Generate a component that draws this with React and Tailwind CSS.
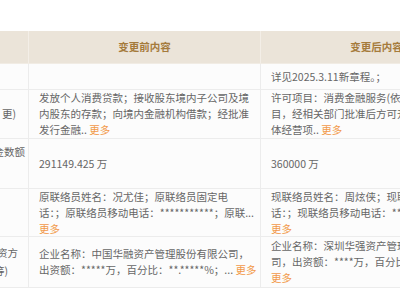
import React from "react";

const More = () => <span className="text-[#f29a4a]">更多</span>;

function Label({ lines }) {
  return (
    <div className="w-[29px] shrink-0 overflow-hidden border-r border-[#ececec] flex flex-col justify-center leading-[18px]">
      {lines.map((l, i) => (
        <div key={i} className="flex justify-end whitespace-nowrap h-[18px]" style={{ paddingRight: l.pr }}>
          {l.t}
        </div>
      ))}
    </div>
  );
}

function Cell({ children }) {
  return (
    <div className="w-[232px] shrink-0 border-r border-[#ececec] pl-[10px] flex flex-col justify-center leading-[16px] overflow-hidden">
      {children}
    </div>
  );
}

function Line({ children }) {
  return <div className="whitespace-nowrap">{children}</div>;
}

function Row({ h, children }) {
  return (
    <div className="flex border-b border-[#ececec] bg-[#fcfcfc]" style={{ height: h }}>
      {children}
    </div>
  );
}

export default function App() {
  return (
    <div
      className="w-[400px] h-[300px] overflow-hidden bg-white text-[10.5px] text-[#666666]"
      style={{ fontFamily: '"Noto Sans CJK SC", "Noto Sans", sans-serif' }}
    >
      <div className="w-[493px] pt-[31px]">
        <div className="flex h-[33px] bg-[#ebe4d9] border-b border-[#f1ece4]">
          <div className="w-[29px] shrink-0 border-r border-[#f3eee7]" />
          <div className="w-[232px] shrink-0 border-r border-[#f3eee7] flex items-center justify-center font-bold text-[#a57b3c]">
            变更前内容
          </div>
          <div className="w-[232px] shrink-0 border-r border-[#f3eee7] flex items-center justify-center font-bold text-[#a57b3c]">
            变更后内容
          </div>
        </div>

        <Row h={26}>
          <Label lines={[]} />
          <Cell />
          <Cell>
            <Line>详见2025.3.11新章程。；</Line>
          </Cell>
        </Row>

        <Row h={49}>
          <Label lines={[{ t: "", pr: 0 }, { t: "更)", pr: 12 }, { t: "", pr: 0 }]} />
          <Cell>
            <Line>发放个人消费贷款；接收股东境内子公司及境</Line>
            <Line>内股东的存款；向境内金融机构借款；经批准</Line>
            <Line>
              发行金融.. <More />
            </Line>
          </Cell>
          <Cell>
            <Line>许可项目：消费金融服务(依法须经批准的项目</Line>
            <Line>目，经相关部门批准后方可开展经营活动，具</Line>
            <Line>
              体经营项.. <More />
            </Line>
          </Cell>
        </Row>

        <Row h={50}>
          <div className="w-[29px] shrink-0 overflow-hidden border-r border-[#ececec] leading-[18px] pt-[4px]">
            <div className="flex justify-end whitespace-nowrap pr-[3px]">注册资金数额</div>
          </div>
          <Cell>
            <Line>291149.425 万</Line>
          </Cell>
          <Cell>
            <Line>360000 万</Line>
          </Cell>
        </Row>

        <Row h={48}>
          <Label lines={[]} />
          <Cell>
            <Line>原联络员姓名：况尤佳；原联络员固定电</Line>
            <Line>话：；原联络员移动电话：***********；原联...</Line>
            <Line>
              <More />
            </Line>
          </Cell>
          <Cell>
            <Line>现联络员姓名：周炫侠；现联络员固定电</Line>
            <Line>话：；现联络员移动电话：***********；现联...</Line>
            <Line>
              <More />
            </Line>
          </Cell>
        </Row>

        <Row h={51}>
          <Label lines={[{ t: "投资人(股权)出资方", pr: 10 }, { t: "股东等)", pr: 20 }]} />
          <Cell>
            <Line>企业名称：中国华融资产管理股份有限公司，</Line>
            <Line>
              出资额：*****万，百分比：**.*****%；... <More />
            </Line>
          </Cell>
          <Cell>
            <Line>企业名称：深圳华强资产管理集团有限责任公</Line>
            <Line>司，出资额：****万，百分比：**.*****%；</Line>
            <Line>
              <More />
            </Line>
          </Cell>
        </Row>
      </div>
    </div>
  );
}
